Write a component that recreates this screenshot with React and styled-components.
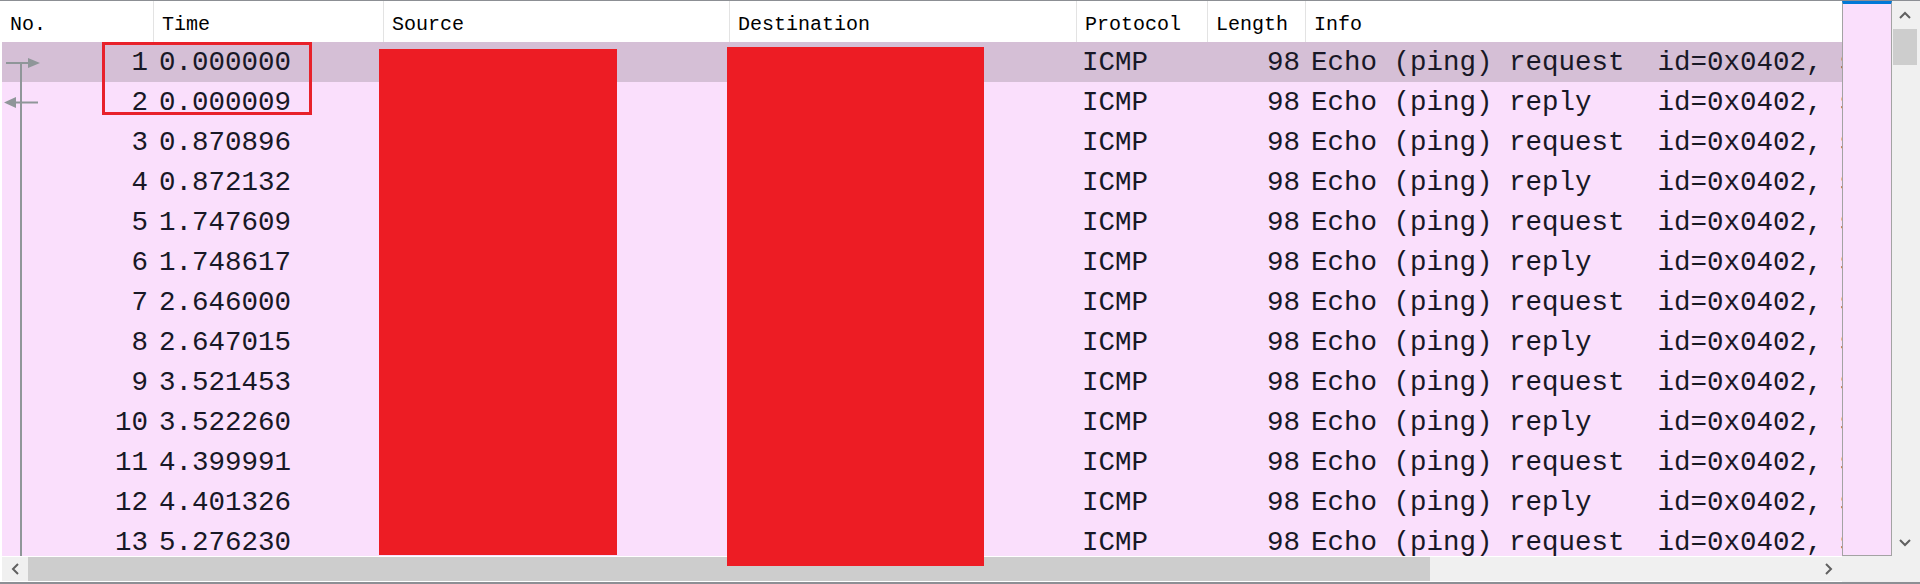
import React from 'react';
import styled, { createGlobalStyle } from 'styled-components';

const Global = createGlobalStyle`
  html, body { margin: 0; padding: 0; background: #fff; }
  #root { width: 1920px; height: 584px; }
`;

const GRID = '151px 230px 346px 347px 131px 98px 1fr';

const Frame = styled.div`
  position: relative;
  width: 1920px;
  height: 584px;
  box-sizing: border-box;
  border-top: 1px solid #8c8f94;
  border-bottom: 2px solid #8c8f94;
  padding-left: 2px;
  background: #fff;
  display: flex;
  flex-direction: column;
  overflow: hidden;
`;

const Body = styled.div`
  display: flex;
  height: 555px;
`;

const ListPane = styled.div`
  width: 1840px;
  overflow: hidden;
  background: #fff;
`;

const HeaderRow = styled.div`
  display: grid;
  grid-template-columns: ${GRID};
  height: 41px;
  background: #fff;
`;

const HeaderCell = styled.div`
  box-sizing: border-box;
  padding: 6px 0 0 8px;
  line-height: 35px;
  font-family: "Liberation Mono", monospace;
  font-size: 20px;
  color: #000;
  white-space: nowrap;
  overflow: hidden;
  border-left: ${(p) => (p.$first ? 'none' : '1px solid #e3e3e3')};
`;

const Row = styled.div`
  display: grid;
  grid-template-columns: ${GRID};
  height: 40px;
  background: ${(p) => (p.$selected ? '#d5bfd6' : '#fadffc')};
`;

const Cell = styled.div`
  position: relative;
  box-sizing: border-box;
  padding: 2px ${(p) => (p.$right ? '5px' : '6px')} 0 ${(p) => (p.$right ? '0' : '6px')};
  line-height: 38px;
  font-family: "Liberation Mono", "DejaVu Sans Mono", monospace;
  font-size: 27.5px;
  color: #181826;
  text-align: ${(p) => (p.$right ? 'right' : 'left')};
  white-space: pre;
  overflow: hidden;
`;

const Mark = styled.svg`
  position: absolute;
  left: 0;
  top: 0;
  width: 44px;
  height: 40px;
`;

const Minimap = styled.div`
  width: 50px;
  box-sizing: border-box;
  border: 1px solid #a3a3a3;
  border-top: 3px solid #0078d7;
  background: #fadffc;
`;

const VScroll = styled.div`
  flex: 1;
  display: flex;
  flex-direction: column;
  background: #f0f0f0;
`;

const ArrowBtn = styled.div`
  flex: none;
  width: ${(p) => p.$w || '24px'};
  height: ${(p) => p.$h || '24px'};
  display: flex;
  align-items: center;
  justify-content: center;
`;

const VThumb = styled.div`
  width: 24px;
  height: 36px;
  margin-left: 1px;
  background: #cdcdcd;
`;

const Spacer = styled.div`
  flex: 1;
`;

const Bottom = styled.div`
  display: flex;
  height: 26px;
`;

const HScroll = styled.div`
  width: 1840px;
  box-sizing: border-box;
  border-top: 1px solid #fff;
  border-bottom: 1px solid #fff;
  background: #f0f0f0;
  display: flex;
`;

const HThumb = styled.div`
  flex: none;
  width: ${(p) => p.$w}px;
  background: #cdcdcd;
`;

const Corner = styled.div`
  flex: 1;
  background: #f0f0f0;
`;

const Redaction = styled.div`
  position: absolute;
  left: ${(p) => p.$x}px;
  top: ${(p) => p.$y}px;
  width: ${(p) => p.$w}px;
  height: ${(p) => p.$h}px;
  background: #ed1c24;
`;

const Highlight = styled.div`
  position: absolute;
  left: 102px;
  top: 41px;
  width: 210px;
  height: 73px;
  box-sizing: border-box;
  border: 3px solid #e8212b;
`;

const Chevron = ({ dir }) => {
  const pts = {
    up: '1,7 6,2 11,7',
    down: '1,2 6,7 11,2',
    left: '7,1 2,6 7,11',
    right: '2,1 7,6 2,11',
  }[dir];
  const vertical = dir === 'up' || dir === 'down';
  return (
    <svg width={vertical ? 12 : 9} height={vertical ? 9 : 12} viewBox={vertical ? '0 0 12 9' : '0 0 9 12'}>
      <polyline points={pts} fill="none" stroke="#606060" strokeWidth="2" />
    </svg>
  );
};

const RelationMark = ({ kind }) => (
  <Mark viewBox="0 0 44 40">
    {kind === 'first' && (
      <>
        <line x1="19" y1="21" x2="19" y2="40" stroke="#8f9699" strokeWidth="2" />
        <line x1="4" y1="21" x2="27" y2="21" stroke="#8f9699" strokeWidth="2" />
        <polygon points="26,16 38,21 26,26" fill="#8f9699" />
      </>
    )}
    {kind === 'last' && (
      <>
        <line x1="19" y1="0" x2="19" y2="40" stroke="#8f9699" strokeWidth="2" />
        <line x1="14" y1="20.5" x2="36" y2="20.5" stroke="#8f9699" strokeWidth="2" />
        <polygon points="14,15 2,20.5 14,26" fill="#8f9699" />
      </>
    )}
    {kind === 'mid' && <line x1="19" y1="0" x2="19" y2="40" stroke="#8f9699" strokeWidth="2" />}
  </Mark>
);

const COLUMNS = ['No.', 'Time', 'Source', 'Destination', 'Protocol', 'Length', 'Info'];

const TIMES = [
  '0.000000', '0.000009', '0.870896', '0.872132', '1.747609', '1.748617', '2.646000',
  '2.647015', '3.521453', '3.522260', '4.399991', '4.401326', '5.276230',
];

const PACKETS = TIMES.map((time, i) => {
  const kind = i % 2 === 0 ? 'request' : 'reply';
  const seq = Math.floor(i / 2) + 1;
  return {
    no: i + 1,
    time,
    proto: 'ICMP',
    len: 98,
    info: `Echo (ping) ${kind.padEnd(9)}id=0x0402, seq=${seq}/${seq * 256}, ttl=64`,
  };
});

export default function App() {
  return (
    <>
      <Global />
      <Frame>
        <Body>
          <ListPane>
            <HeaderRow>
              {COLUMNS.map((c, i) => (
                <HeaderCell key={c} $first={i === 0}>
                  {c}
                </HeaderCell>
              ))}
            </HeaderRow>
            {PACKETS.map((p, i) => (
              <Row key={p.no} $selected={i === 0}>
                <Cell $right>
                  <RelationMark kind={i === 0 ? 'first' : i === 1 ? 'last' : 'mid'} />
                  {p.no}
                </Cell>
                <Cell>{p.time}</Cell>
                <Cell />
                <Cell />
                <Cell>{p.proto}</Cell>
                <Cell $right>{p.len}</Cell>
                <Cell>{p.info}</Cell>
              </Row>
            ))}
          </ListPane>
          <Minimap />
          <VScroll>
            <ArrowBtn $w="26px" $h="28px">
              <Chevron dir="up" />
            </ArrowBtn>
            <VThumb />
            <Spacer />
            <ArrowBtn $w="26px" $h="28px">
              <Chevron dir="down" />
            </ArrowBtn>
          </VScroll>
        </Body>
        <Bottom>
          <HScroll>
            <ArrowBtn $w="26px" $h="24px">
              <Chevron dir="left" />
            </ArrowBtn>
            <HThumb $w={1402} />
            <Spacer />
            <ArrowBtn $w="28px" $h="24px">
              <Chevron dir="right" />
            </ArrowBtn>
          </HScroll>
          <Corner />
        </Bottom>
        <Redaction $x={379} $y={48} $w={238} $h={506} />
        <Redaction $x={727} $y={46} $w={257} $h={519} />
        <Highlight />
      </Frame>
    </>
  );
}
